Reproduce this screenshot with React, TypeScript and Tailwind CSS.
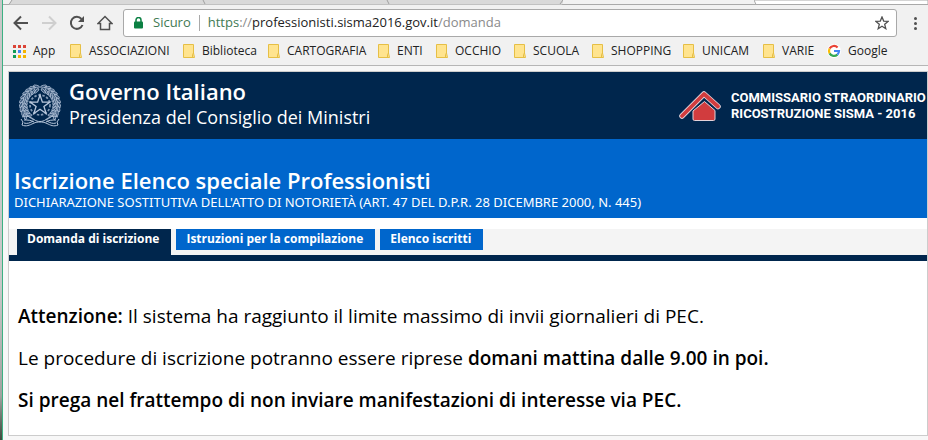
import { ReactNode } from 'react';

type BookmarkProps = {
  label: string;
  icon?: ReactNode;
};

const folders = [
  'ASSOCIAZIONI',
  'Biblioteca',
  'CARTOGRAFIA',
  'ENTI',
  'OCCHIO',
  'SCUOLA',
  'SHOPPING',
  'UNICAM',
  'VARIE',
];

const tabs = ['Domanda di iscrizione', 'Istruzioni per la compilazione', 'Elenco iscritti'];

const FolderIcon = () => (
  <svg className="w-3 h-[14px] shrink-0" viewBox="0 0 12 14" aria-hidden="true">
    <path d="M.5.5h10v8.5l1 4.5H.5z" fill="#ffe48f" stroke="#e6bf45" />
    <path d="M9.5 13.5v-3l1-1.5" fill="none" stroke="#e6bf45" />
  </svg>
);

const appColors = [
  '#db4437', '#db4437', '#db4437',
  '#0f9d58', '#4285f4', '#f4b400',
  '#0f9d58', '#f4b400', '#f4b400',
];

const AppsIcon = () => (
  <svg className="w-[13px] h-[13px] shrink-0" viewBox="0 0 13 13" aria-hidden="true">
    {appColors.map((color, i) => (
      <rect key={i} x={(i % 3) * 5} y={Math.floor(i / 3) * 5} width="3" height="3" fill={color} />
    ))}
  </svg>
);

const GoogleIcon = () => (
  <svg className="w-[14px] h-[14px] shrink-0" viewBox="0 0 14 14" aria-hidden="true">
    <circle cx="7" cy="7" r="7" fill="#fff" />
    <g fill="none" strokeWidth="2.2">
      <path d="M2.6 4.6A5 5 0 0 1 10.6 3.5" stroke="#ea4335" />
      <path d="M2.6 9.4A5 5 0 0 1 2.6 4.6" stroke="#fbbc05" />
      <path d="M10.4 10.6A5 5 0 0 1 2.6 9.4" stroke="#34a853" />
      <path d="M7 7h5A5 5 0 0 1 10.4 10.6" stroke="#4285f4" />
    </g>
  </svg>
);

// angles of the leaf pairs along one branch, from the tip down to the ribbon
const leaves = [-14, -27, -40, -53, -66, -79, -92, -105, -118, -131];

const Emblem = () => (
  <svg className="w-[42px] h-[46px] shrink-0" viewBox="0 0 42 46" fill="none" stroke="#b9c8dc" strokeWidth=".8" aria-hidden="true">
    <path d="M21 12l2.400 7.100h7.500l-6 4.400 2.300 7.100-6.200-4.300-6.200 4.300 2.300-7.100-6-4.400h7.500z" strokeWidth="1.300" />
    <circle cx="21" cy="22" r="10" strokeWidth="1.800" strokeDasharray="2.400 1.700" opacity=".7" />
    {[false, true].map((flip) => (
      <g key={String(flip)} transform={flip ? 'matrix(-1 0 0 1 42 0)' : undefined}>
        <path d="M16 4C7 7 3 15 4 24c1 6 5 10 11 13" />
        {leaves.map((deg) => (
          <g key={deg} transform={`rotate(${deg} 21 22)`} fill="#7f95b5" fillOpacity=".45" strokeWidth=".7">
            <ellipse cx="22" cy="3.200" rx="3.200" ry="1.300" transform="rotate(28 22 3.200)" />
            <ellipse cx="21" cy="7.500" rx="3" ry="1.200" transform="rotate(-28 21 7.500)" />
          </g>
        ))}
        <path d="M3 34c4-2 9 0 12 2.500 2 1.500 4 2 6 2M2 36l2 3-1 3c4 2 8 0 11-1.500 3-1.500 5-1.500 7-1.500M5 37c4 0 7 0 10 2M5 40c3 1 6 0 9-2" strokeWidth="1" />
      </g>
    ))}
  </svg>
);

const HouseLogo = () => (
  <svg className="w-[42px] h-8 shrink-0" viewBox="0 0 42 32" strokeLinejoin="round" aria-hidden="true">
    <path d="M3 26L25 4L39 16.500" fill="none" stroke="#e3d3da" strokeWidth="5.500" strokeLinecap="round" />
    <path d="M3 26L25 4L39 16.500" fill="none" stroke="#d13c3e" strokeWidth="3.800" strokeLinecap="round" />
    <path d="M25.500 11.500L36 20.500V29q0 1.500-1.500 1.500h-19Q14 30.500 14 29v-8z" fill="#d13c3e" stroke="#e3d3da" />
  </svg>
);

const Bookmark = ({ label, icon = <FolderIcon /> }: BookmarkProps) => (
  <a href="#" className="flex items-center gap-[7px] whitespace-nowrap">
    {icon}
    {label}
  </a>
);

const TabStrip = () => (
  <div className="flex justify-between h-[5px] border-b border-[#a9a9a9] bg-[#f1f1f1]">
    <svg className="w-[560px] h-[5px]" viewBox="0 0 560 5" aria-hidden="true">
      <path d="M9 0L6 4.500H559L561 0z" fill="#d9d9d9" />
      <path d="M6 4.500L9 0M202 4L200 0M386 4L384 0M557 4L560 0" stroke="#a0a0a0" fill="none" />
    </svg>
    <svg className="w-[174px] h-[5px]" viewBox="0 0 174 5" aria-hidden="true">
      <path d="M0 0L2 4.500H174V0z" fill="#fff" stroke="#a9a9a9" />
    </svg>
  </div>
);

const Toolbar = () => (
  <div className="flex items-center h-8 pl-[10px] pr-[11px] pt-1">
    <div className="flex items-center gap-3 text-[#505050]">
      <button type="button" aria-label="Indietro">
        <svg className="w-4 h-4" viewBox="0 0 16 16" fill="none" stroke="currentColor" strokeWidth="2">
          <path d="M15 8H2M8 1.500L1.500 8 8 14.500" />
        </svg>
      </button>
      <button type="button" aria-label="Avanti" className="text-[#cfcfcf]">
        <svg className="w-4 h-4" viewBox="0 0 16 16" fill="none" stroke="currentColor" strokeWidth="2">
          <path d="M1 8h13M8 1.500L14.500 8 8 14.500" />
        </svg>
      </button>
      <button type="button" aria-label="Ricarica">
        <svg className="w-4 h-4" viewBox="0 0 16 16" fill="none" stroke="currentColor" strokeWidth="2">
          <path d="M13.500 10A6 6 0 1 1 12.500 4" />
          <path d="M15 1v6H9z" fill="currentColor" stroke="none" />
        </svg>
      </button>
      <button type="button" aria-label="Pagina iniziale">
        <svg className="w-4 h-4" viewBox="0 0 16 16" fill="none" stroke="currentColor" strokeWidth="1.500">
          <path d="M1 8.500L8 1.500l7 7h-2.500V14.500h-9V8.500z" />
        </svg>
      </button>
    </div>
    <div className="flex flex-1 items-center h-7 ml-[10px] pl-[10px] pr-[7px] rounded-[3px] border border-[#a9a9a9] bg-white text-[13px] text-[#3f7a54]">
      <svg className="w-[9px] h-3 mr-[10px]" viewBox="0 0 9 12" aria-hidden="true">
        <path d="M2 5V3a2.500 2.500 0 0 1 5 0v2" fill="none" stroke="#0b8043" strokeWidth="1.500" />
        <rect y="4.500" width="9" height="7" rx="1" fill="#0b8043" />
      </svg>
      <span>Sicuro</span>
      <span className="w-px h-4 mx-2 bg-[#a9a9a9]" />
      <span className="flex-1 whitespace-nowrap">
        https<span className="text-[#8a8a8a]">://</span>
        <span className="text-[#222222]">professionisti.sisma2016.gov.it</span>
        <span className="text-[#8a8a8a]">/domanda</span>
      </span>
      <button type="button" aria-label="Aggiungi ai preferiti">
        <svg className="w-[14px] h-[14px]" viewBox="0 0 14 14" fill="none" stroke="#505050" strokeWidth="1.300">
          <path d="M7 1l1.700 4.100 4.400.3-3.400 2.900 1.100 4.400L7 10.300l-3.800 2.400 1.100-4.400L.9 5.400l4.400-.3z" />
        </svg>
      </button>
    </div>
    <button type="button" aria-label="Menu" className="ml-[17px]">
      <svg className="w-[3px] h-[13px]" viewBox="0 0 3 13" fill="#505050">
        <circle cx="1.500" cy="1.500" r="1.500" />
        <circle cx="1.500" cy="6.500" r="1.500" />
        <circle cx="1.500" cy="11.500" r="1.500" />
      </svg>
    </button>
  </div>
);

const BookmarksBar = () => (
  <nav className="grid grid-cols-[57px_113px_85px_110px_58px_78px_78px_91px_80px_64px_auto] items-center h-[29px] pl-[10px] border-b border-[#b6b6b6] text-[12px] text-[#222222]">
    <Bookmark label="App" icon={<AppsIcon />} />
    {folders.map((folder) => (
      <Bookmark key={folder} label={folder} />
    ))}
    <Bookmark label="Google" icon={<GoogleIcon />} />
  </nav>
);

const SiteHeader = () => (
  <header className="text-white">
    <div className="flex items-center h-[67px] pl-[10px] overflow-hidden bg-[#00264d]">
      <Emblem />
      <div className="flex-1 ml-2 pb-[6px] whitespace-nowrap">
        <p className="text-[22px] leading-7 font-semibold">Governo Italiano</p>
        <p className="text-[18px] leading-6">Presidenza del Consiglio dei Ministri</p>
      </div>
      <div className="flex items-center gap-[10px] w-[248px] shrink-0">
        <HouseLogo />
        <p className="font-['Roboto'] text-[13px] leading-4 font-bold whitespace-nowrap">
          COMMISSARIO STRAORDINARIO
          <br />
          RICOSTRUZIONE SISMA - 2016
        </p>
      </div>
    </div>
    <div className="h-[79px] pl-[5px] pt-[27px] bg-[#0066cc]">
      <h1 className="text-[22px] leading-7 font-semibold">Iscrizione Elenco speciale Professionisti</h1>
      <p className="font-['Noto_Sans',sans-serif] text-[13px] leading-4">
        DICHIARAZIONE SOSTITUTIVA DELL'ATTO DI NOTORIETÀ (ART. 47 DEL D.P.R. 28 DICEMBRE 2000, N. 445)
      </p>
    </div>
  </header>
);

const SiteTabs = () => (
  <nav className="flex items-start gap-[5px] h-8 mt-[11px] pl-2 border-b-[6px] border-[#00264d] bg-[#f4f4f4] text-[12px] font-bold text-white">
    {tabs.map((tab, i) => (
      <a key={tab} href="#" className={i === 0 ? 'h-[26px] pl-[10px] pr-3 leading-5 bg-[#00264d]' : 'h-[21px] pl-[10px] pr-3 leading-5 bg-[#0066cc]'}>
        {tab}
      </a>
    ))}
  </nav>
);

const App = () => (
  <div className="flex min-h-screen overflow-hidden font-['Open_Sans',sans-serif]">
    <div className="w-[3px] shrink-0 border-r border-[#3cb183] bg-linear-to-b from-[#c8c8c8] from-65% via-[#a0a3a0] via-90% to-[#3e4a3e]" />
    <div className="flex flex-1 flex-col min-w-0 bg-[#f1f1f1]">
      <TabStrip />
      <Toolbar />
      <BookmarksBar />
      <div className="flex flex-1 flex-col pt-[5px] pl-[5px] pb-1 bg-[#f7f7f7]">
        <div className="flex flex-1 flex-col border border-[#cccccc] bg-white">
          <SiteHeader />
          <SiteTabs />
          <main className="flex flex-col gap-[18px] pl-[9px] pt-[43px] text-[19px] leading-6 text-black">
            <p>
              <b className="font-semibold">Attenzione:</b> Il sistema ha raggiunto il limite massimo di invii giornalieri di PEC.
            </p>
            <p>
              Le procedure di iscrizione potranno essere riprese <b className="font-semibold">domani mattina dalle 9.00 in poi.</b>
            </p>
            <p className="font-semibold">Si prega nel frattempo di non inviare manifestazioni di interesse via PEC.</p>
          </main>
        </div>
      </div>
    </div>
  </div>
);

export default App;
